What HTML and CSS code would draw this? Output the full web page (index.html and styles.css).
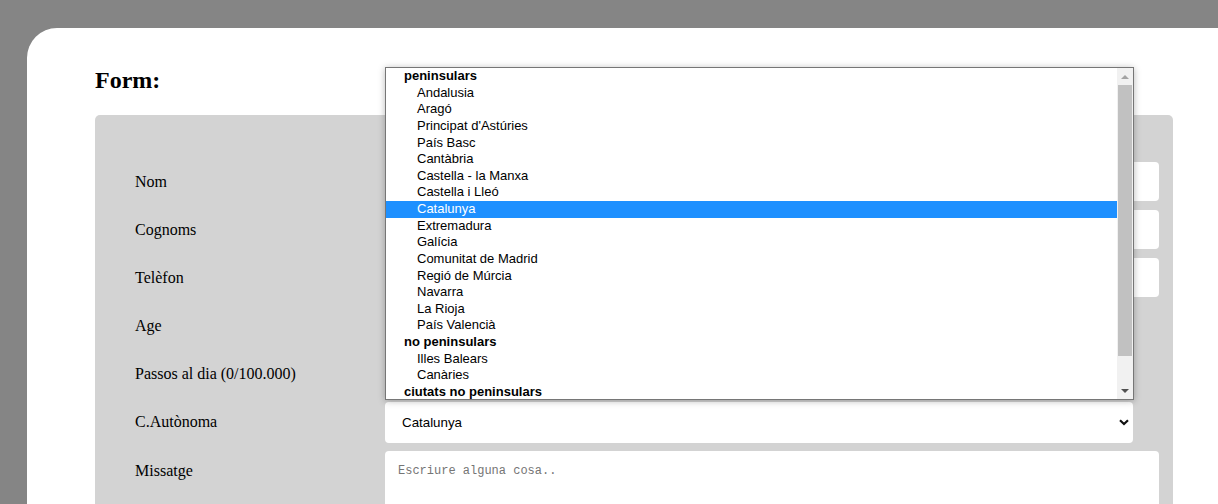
FILE: index.html
```html
<!DOCTYPE html>
<html lang="ca">
<head>
<meta charset="utf-8">
<title>Form</title>
<link rel="stylesheet" href="styles.css">
</head>
<body>
<div class="card">
  <h2 class="title">Form:</h2>
  <form class="panel">
    <div class="row"><label class="lbl">Nom</label><input class="field" type="text"></div>
    <div class="row"><label class="lbl">Cognoms</label><input class="field" type="text"></div>
    <div class="row"><label class="lbl">Telèfon</label><input class="field" type="text"></div>
    <div class="row"><label class="lbl">Age</label><input class="field short" type="text"></div>
    <div class="row"><label class="lbl">Passos al dia (0/100.000)</label><input class="field short" type="text"></div>
    <div class="row"><label class="lbl">C.Autònoma</label>
      <div class="select-wrap">
        <div class="select">Catalunya</div>
        <svg class="chev" width="10" height="7" viewBox="0 0 10 7"><path d="M1 1.2 L5 5 L9 1.2" fill="none" stroke="#111" stroke-width="2.2"/></svg>
        <div class="popup">
          <div class="list">
            <div class="grp">peninsulars</div>
            <div class="opt">Andalusia</div>
            <div class="opt">Aragó</div>
            <div class="opt">Principat d'Astúries</div>
            <div class="opt">País Basc</div>
            <div class="opt">Cantàbria</div>
            <div class="opt">Castella - la Manxa</div>
            <div class="opt">Castella i Lleó</div>
            <div class="opt sel">Catalunya</div>
            <div class="opt">Extremadura</div>
            <div class="opt">Galícia</div>
            <div class="opt">Comunitat de Madrid</div>
            <div class="opt">Regió de Múrcia</div>
            <div class="opt">Navarra</div>
            <div class="opt">La Rioja</div>
            <div class="opt">País Valencià</div>
            <div class="grp">no peninsulars</div>
            <div class="opt">Illes Balears</div>
            <div class="opt">Canàries</div>
            <div class="grp">ciutats no peninsulars</div>
          </div>
          <div class="sbar">
            <div class="sbtn"><span class="arr-up"></span></div>
            <div class="track"><div class="thumb"></div></div>
            <div class="sbtn"><span class="arr-down"></span></div>
          </div>
        </div>
      </div>
    </div>
    <div class="row row-msg"><label class="lbl">Missatge</label><textarea class="field area" placeholder="Escriure alguna cosa.."></textarea></div>
  </form>
</div>
</body>
</html>
```
FILE: styles.css
```css
html, body {
  margin: 0;
  padding: 0;
  background: #858585;
  overflow: hidden;
}
body {
  padding-top: 28px;
  padding-left: 27px;
  height: 504px;
  box-sizing: border-box;
}
.card {
  background: #fff;
  border-top-left-radius: 30px;
  padding: 39px 45px 0 68px;
  height: 600px;
  font-family: "Liberation Serif", "Times New Roman", serif;
}
.title {
  margin: 0 0 21px 0;
  font-size: 24px;
  line-height: 27px;
  font-weight: bold;
  color: #000;
}
.panel {
  background: #d3d3d3;
  border-radius: 5px;
  padding: 47px 14px 40px 40px;
  display: flex;
  flex-direction: column;
  gap: 9px;
}
.row {
  display: flex;
  align-items: flex-start;
}
.row-msg {
  margin-top: -1px;
}
.lbl {
  width: 250px;
  flex: none;
  font-size: 16px;
  line-height: 39px;
  color: #000;
}
.field {
  flex: 1;
  height: 39px;
  border: none;
  border-radius: 4px;
  background: #fff;
  box-sizing: border-box;
  margin: 0;
  outline: none;
}
.field.short {
  flex: none;
  width: 600px;
}
.area {
  height: 150px;
  padding: 13px 13px;
  font-family: "Liberation Mono", "DejaVu Sans Mono", monospace;
  font-size: 12px;
  resize: none;
}
.area::placeholder {
  color: #757575;
}
.select-wrap {
  position: relative;
  width: 748px;
  height: 41px;
}
.select {
  height: 41px;
  background: #fff;
  border-radius: 4px;
  font-family: "Liberation Sans", Arial, sans-serif;
  font-size: 13.33px;
  line-height: 41px;
  padding-left: 17px;
  color: #000;
}
.chev {
  position: absolute;
  right: 4px;
  top: 17px;
}
.popup {
  position: absolute;
  left: 0;
  top: -335px;
  width: 749px;
  height: 333px;
  box-sizing: border-box;
  border: 1px solid #767676;
  background: #fff;
  box-shadow: 0 1px 7px rgba(0, 0, 0, 0.28);
  display: flex;
  font-family: "Liberation Sans", Arial, sans-serif;
  font-size: 13px;
  color: #000;
  z-index: 5;
}
.list {
  width: 731px;
  flex: none;
}
.grp, .opt {
  height: 16.63px;
  line-height: 16.63px;
  white-space: nowrap;
}
.grp {
  font-weight: bold;
  padding-left: 18px;
}
.opt {
  padding-left: 31px;
}
.opt.sel {
  background: #1e90ff;
  color: #fff;
}
.sbar {
  flex: 1;
  background: #f1f1f1;
  display: flex;
  flex-direction: column;
}
.sbtn {
  height: 17px;
  display: flex;
  align-items: center;
  justify-content: center;
}
.track {
  flex: 1;
}
.thumb {
  margin: 0 1px 0 1px;
  height: 271px;
  background: #c1c1c1;
}
.arr-up {
  width: 0;
  height: 0;
  border-left: 4px solid transparent;
  border-right: 4px solid transparent;
  border-bottom: 4px solid #a3a3a3;
}
.arr-down {
  width: 0;
  height: 0;
  border-left: 4px solid transparent;
  border-right: 4px solid transparent;
  border-top: 4px solid #505050;
}
```
